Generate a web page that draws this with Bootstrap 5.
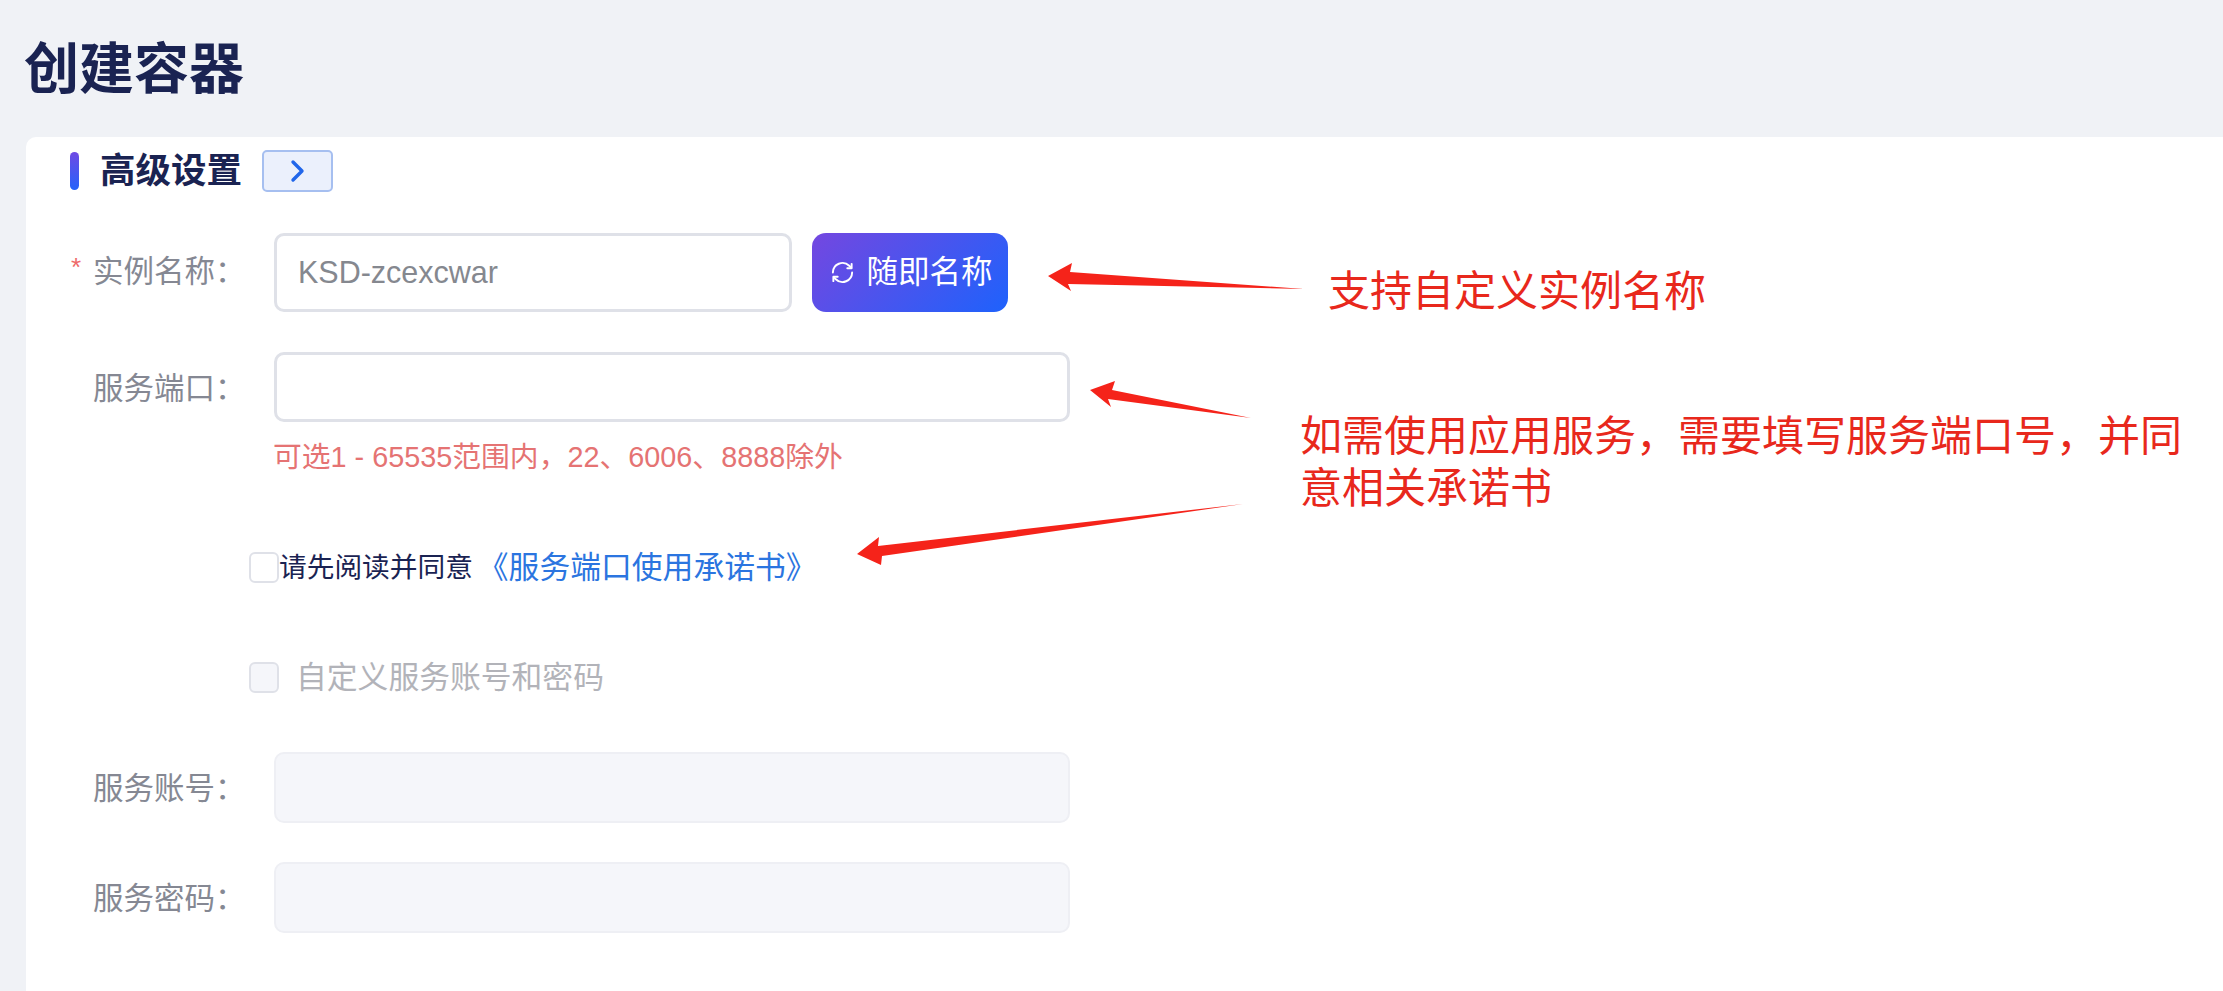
<!doctype html>
<html lang="zh-CN">
<head>
<meta charset="utf-8">
<title>创建容器</title>
<link href="https://cdn.jsdelivr.net/npm/bootstrap@5.3.0/dist/css/bootstrap.min.css" rel="stylesheet">
<style>
html,body{height:100%;margin:0;overflow:hidden}
body{background:#f0f2f6;font-family:"Liberation Sans","Noto Sans CJK SC",sans-serif;color:#1a2352}
.pg{width:2223px;height:991px}
.hdr{height:137px;padding-left:24px;padding-top:1px}
.hdr h1{font-size:55px;font-weight:700;margin:0;color:#1a2352;line-height:1}
.sheet{margin-left:26px;height:854px;background:#fff;border-top-left-radius:10px;padding-left:44px}
.sec{padding-top:13px;height:55px}
.sec-bar{width:9px;height:38px;border-radius:5px;background:linear-gradient(180deg,#6f4ae4,#2563fa);margin-right:21px}
.sec-t{font-size:35.5px;font-weight:700;line-height:1;color:#1a2352;margin-right:20px;padding-top:2px}
.sec-btn{width:71px;height:42px;background:#ebf0fc;border:2px solid #a6bff0;border-radius:5px;padding:0}
.fld{display:flex}
.fld-top{margin-top:41px}
.fld-top .lbl{padding-bottom:4px}
.fld-port{margin-top:40px}
.fld-acct{margin-top:59px}
.fld-pass{margin-top:39px}
.lbl{width:159px;margin-right:45px;margin-bottom:0;padding-top:2px;font-size:30.5px;line-height:1;color:#858893;text-align:left;padding-left:23px;position:relative;white-space:nowrap}
.star{position:absolute;left:1px;top:0;color:#ee6a6a;font-size:26px}
.inp{border:3px solid #dfe1e8;border-radius:10px;background:#fff;height:79px;width:518px;padding:0 21px;font-size:30.5px;color:#85888f;font-family:"Liberation Sans",sans-serif;box-shadow:none}
.inp::placeholder{color:#85888f}
.inp-w{width:796px;height:70px}
.inp-off,.inp-off.form-control:disabled{background:#f5f6fa;border:2px solid #eeeff4;height:71px}
.rand{margin-left:20px;width:196px;height:79px;border:0;border-radius:14px;background:linear-gradient(135deg,#7447e0,#1e62fc);color:#fff;font-size:31.5px;padding:0 0 0 3px;line-height:1;column-gap:11px}
.rand:hover{color:#fff}
.hint{margin:17px 0 0 203px;font-size:28.8px;line-height:36px;color:#e57373}
.cbx,.cbx.form-check-input{appearance:none;width:30px;height:31px;border:2px solid #dfe1e8;border-radius:6px;background:#fff;margin:0;flex:none}
.chk{margin-left:179px;height:31px}
.chk-agree{margin-top:77px}
.chk-own{margin-top:79px}
.chk-t{font-size:27.7px;line-height:31px;color:#1a2352;white-space:nowrap}
.lk{font-size:30.8px;color:#2b75e0;text-decoration:none;margin-left:5px;line-height:31px;white-space:nowrap}
.off-t{font-size:30.8px;line-height:31px;color:#b2b3b9;margin-left:17px;white-space:nowrap}
.cbx.cbx-off.form-check-input:disabled{background:#f5f6fa;opacity:1;border-color:#dfe1e8}
.ink{position:absolute;left:0;top:0;pointer-events:none}
.say{position:absolute;color:#e8281c;font-size:42px;line-height:52px;font-family:"Noto Sans CJK SC",sans-serif}
.say-a{left:1328px;top:262px}
.say-b{left:1300px;top:407px;width:900px}
</style>
</head>
<body>
<div class="pg position-relative">
  <div class="hdr d-flex align-items-center"><h1>创建容器</h1></div>
  <div class="sheet">
    <div class="sec d-flex align-items-center">
      <span class="sec-bar"></span>
      <span class="sec-t">高级设置</span>
      <button class="sec-btn btn d-flex align-items-center justify-content-center" type="button" aria-label="展开">
        <svg width="16" height="24" viewBox="0 0 16 24" fill="none" stroke="#2166ea" stroke-width="3.4" stroke-linecap="round" stroke-linejoin="round"><path d="M3 3l9 9-9 9"/></svg>
      </button>
    </div>
    <div class="fld fld-top align-items-center">
      <label class="lbl"><span class="star">*</span>实例名称：</label>
      <input class="inp form-control" placeholder="KSD-zcexcwar">
      <button class="rand btn d-flex align-items-center justify-content-center" type="button">
        <svg width="25" height="25" viewBox="0 0 26 26" fill="none" stroke="#fff" stroke-width="2" stroke-linecap="round" stroke-linejoin="round"><path d="M3 13a10 10 0 0 1 17-7l2 2"/><path d="M23 13a10 10 0 0 1-17 7l-2-2"/><path d="M22.500 4v4.500h-4.500"/><path d="M3.500 22v-4.500h4.500"/></svg>
        <span>随即名称</span>
      </button>
    </div>
    <div class="fld fld-port align-items-center">
      <label class="lbl">服务端口：</label>
      <input class="inp inp-w form-control">
    </div>
    <div class="hint">可选1 - 65535范围内，22、6006、8888除外</div>
    <div class="chk chk-agree d-flex align-items-center">
      <input class="cbx form-check-input" type="checkbox" aria-label="同意">
      <span class="chk-t">请先阅读并同意</span><a class="lk" href="#">《服务端口使用承诺书》</a>
    </div>
    <div class="chk chk-own d-flex align-items-center">
      <input class="cbx cbx-off form-check-input" type="checkbox" disabled aria-label="自定义">
      <span class="off-t">自定义服务账号和密码</span>
    </div>
    <div class="fld fld-acct align-items-center">
      <label class="lbl">服务账号：</label>
      <input class="inp inp-w inp-off form-control" disabled>
    </div>
    <div class="fld fld-pass align-items-center">
      <label class="lbl">服务密码：</label>
      <input class="inp inp-w inp-off form-control" disabled>
    </div>
  </div>
  <svg class="ink" width="2223" height="991" viewBox="0 0 2223 991">
    <g fill="#f5231a">
      <path d="M1048 276L1072 263L1070 272L1304 289L1068 284L1071 291Z"/>
      <path d="M1090 390L1115 381L1112 390L1251 418L1108 399L1111 407Z"/>
      <path d="M857 554L879 537L878 546L1243 504L882 556L881 565Z"/>
    </g>
  </svg>
  <div class="say say-a">支持自定义实例名称</div>
  <div class="say say-b">如需使用应用服务，需要填写服务端口号，并同<br>意相关承诺书</div>
</div>
<script src="https://cdn.jsdelivr.net/npm/bootstrap@5.3.0/dist/js/bootstrap.bundle.min.js"></script>
</body>
</html>
